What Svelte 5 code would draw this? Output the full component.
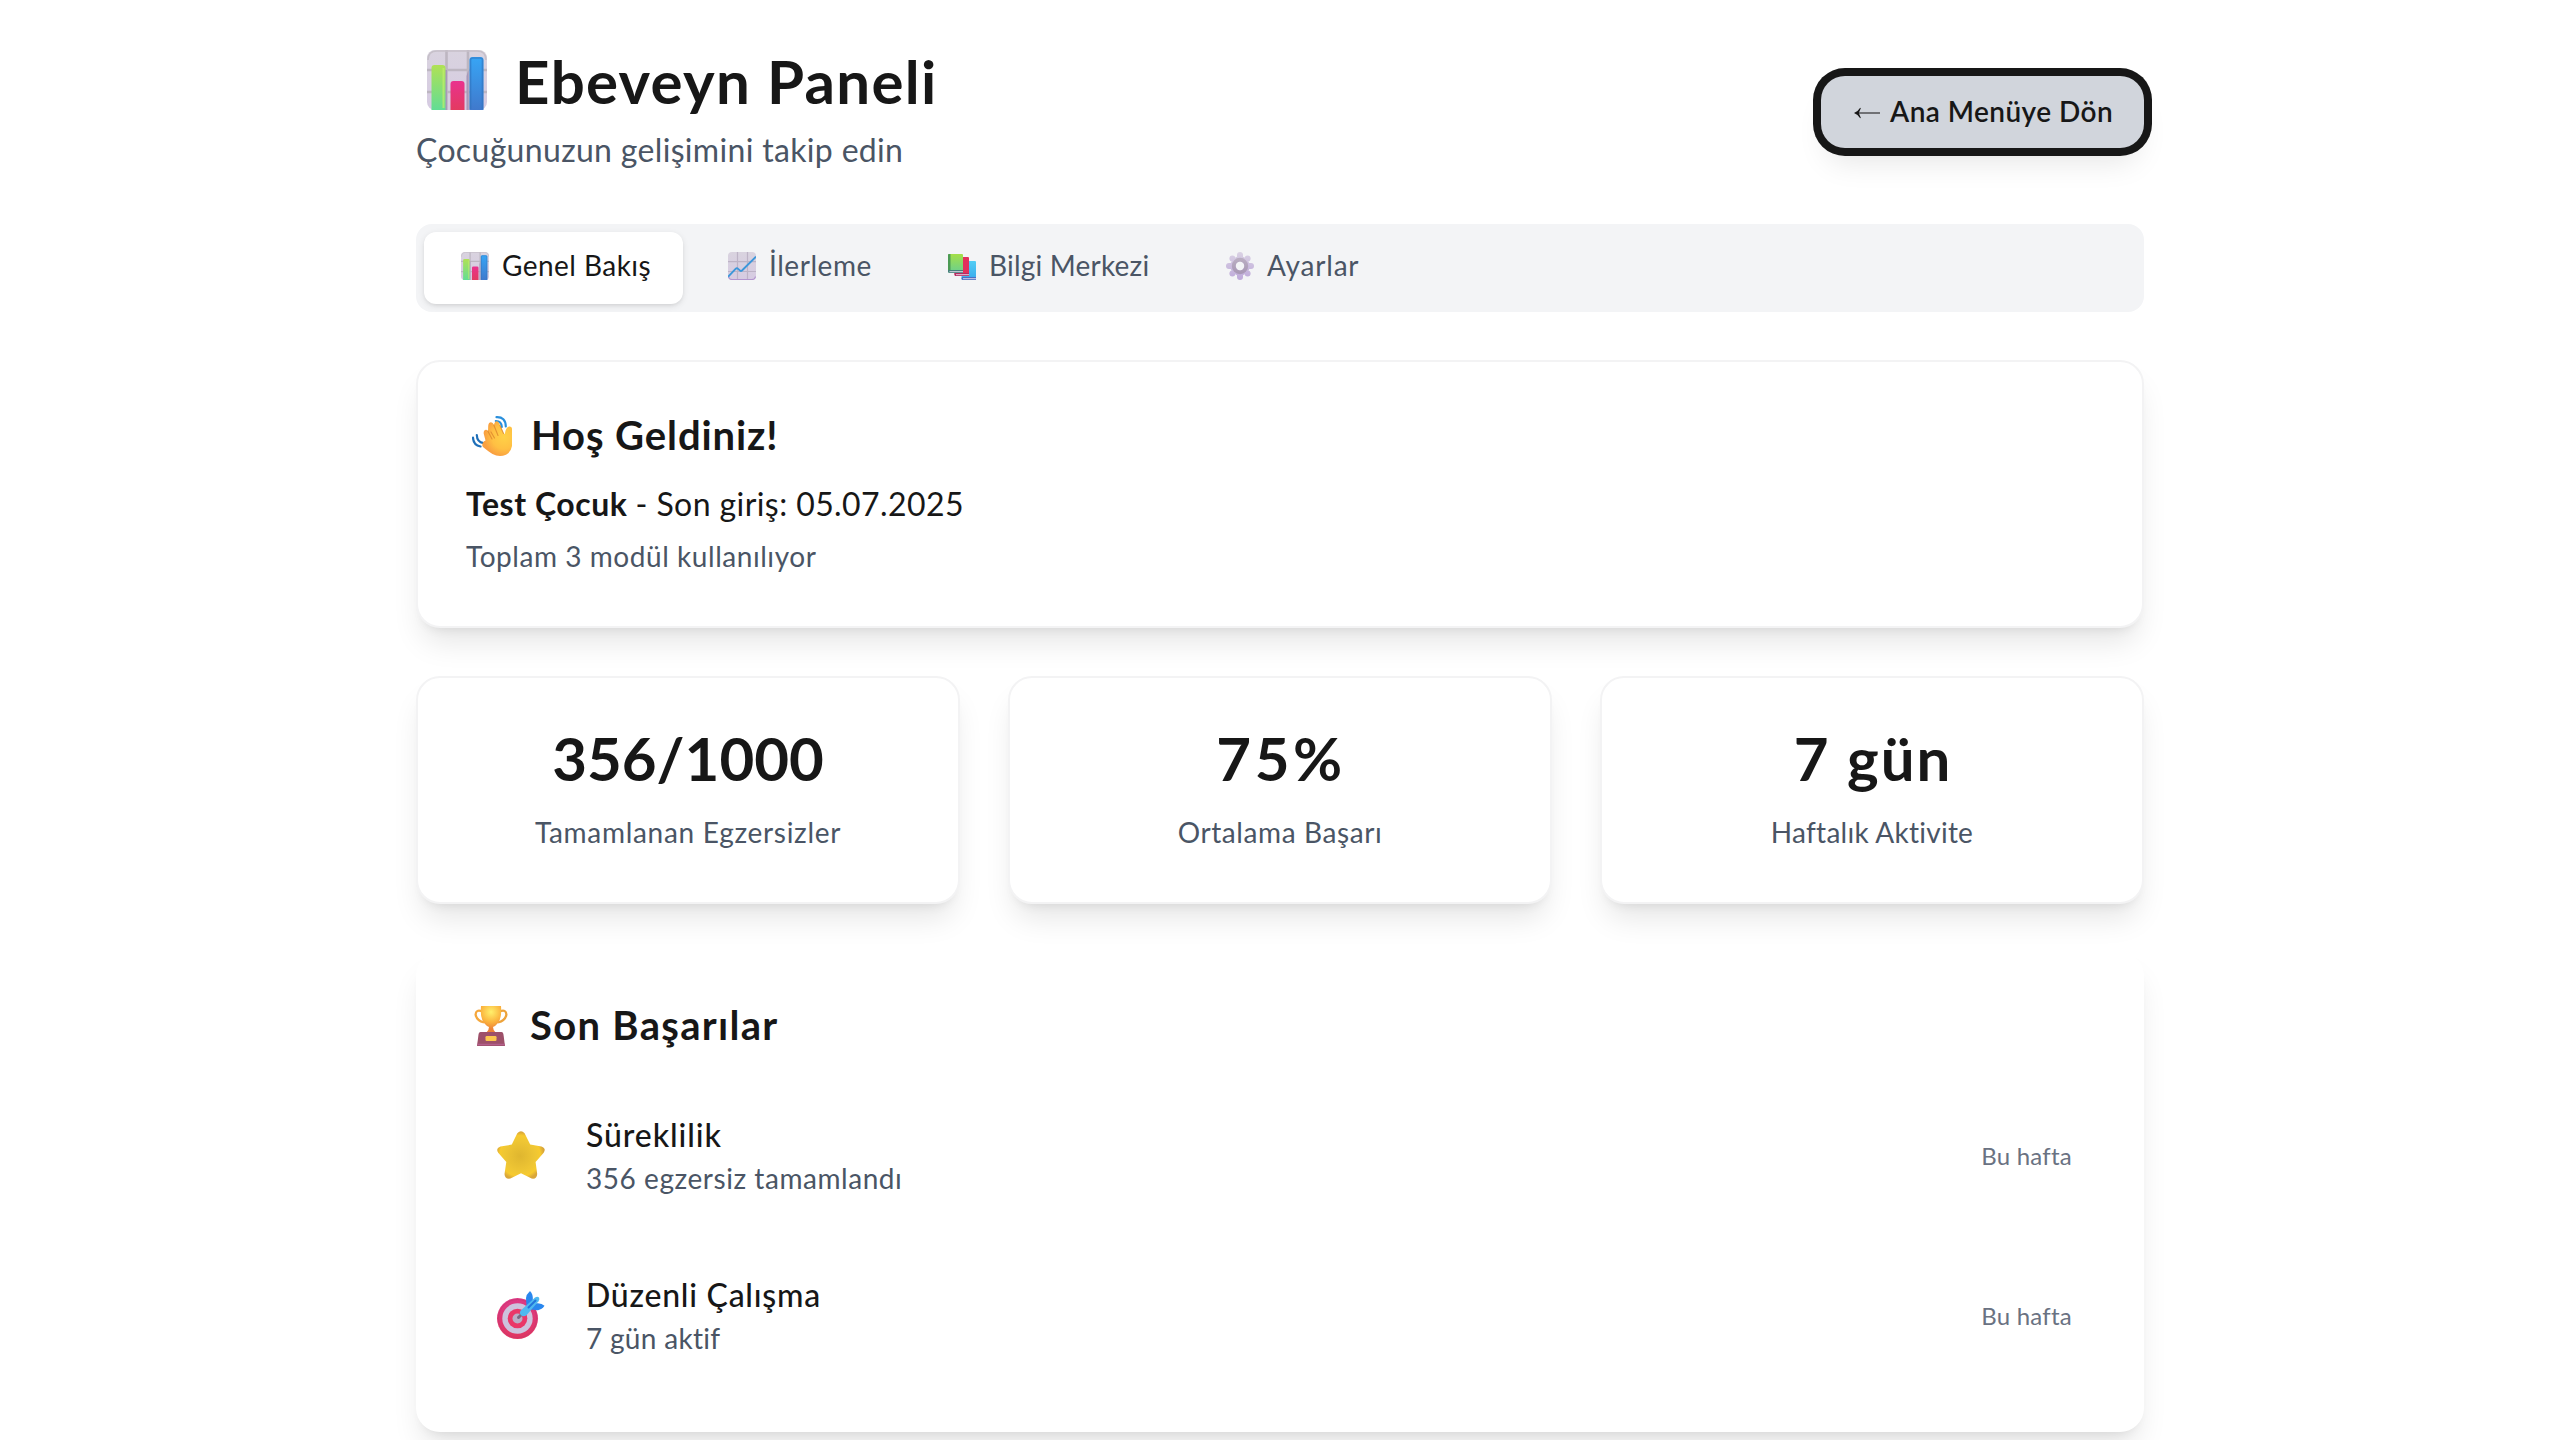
<script>
  let active = $state('overview');

  const tabs = [
    { id: 'overview', label: 'Genel Bakış', icon: 'bars' },
    { id: 'progress', label: 'İlerleme', icon: 'trend' },
    { id: 'info', label: 'Bilgi Merkezi', icon: 'books' },
    { id: 'settings', label: 'Ayarlar', icon: 'gear' }
  ];

  const stats = [
    { id: 'done', value: '356/1000', label: 'Tamamlanan Egzersizler' },
    { id: 'average', value: '75%', label: 'Ortalama Başarı' },
    { id: 'weekly', value: '7 gün', label: 'Haftalık Aktivite' }
  ];

  const achievements = [
    { id: 'streak', icon: 'star', title: 'Süreklilik', detail: '356 egzersiz tamamlandı', when: 'Bu hafta' },
    { id: 'regular', icon: 'target', title: 'Düzenli Çalışma', detail: '7 gün aktif', when: 'Bu hafta' }
  ];
</script>

<!-- Shared gradients for the icon set -->
<svg class="defs" width="0" height="0" aria-hidden="true">
  <defs>
    <linearGradient id="paper" x1="0" y1="0" x2="0" y2="1"><stop offset="0" stop-color="#d9d3df" /><stop offset="1" stop-color="#d6cbe2" /></linearGradient>
    <linearGradient id="green" x1="0" y1="0" x2="0" y2="1"><stop offset="0" stop-color="#b0e155" /><stop offset="1" stop-color="#62dd95" /></linearGradient>
    <linearGradient id="pink" x1="0" y1="0" x2="0" y2="1"><stop offset="0" stop-color="#e9328e" /><stop offset="1" stop-color="#e33a60" /></linearGradient>
    <linearGradient id="blue" x1="0" y1="0" x2="0" y2="1"><stop offset="0" stop-color="#37a5f5" /><stop offset="1" stop-color="#4079cc" /></linearGradient>
    <linearGradient id="sky" x1="0" y1="0" x2="0" y2="1"><stop offset="0" stop-color="#52cdf4" /><stop offset="1" stop-color="#38a9ec" /></linearGradient>
    <linearGradient id="leaf" x1="0" y1="0" x2="0" y2="1"><stop offset="0" stop-color="#a4df48" /><stop offset="1" stop-color="#68cf91" /></linearGradient>
    <linearGradient id="lilac" gradientUnits="userSpaceOnUse" x1="14" y1="0" x2="14" y2="28"><stop offset="0" stop-color="#dad2e4" /><stop offset="1" stop-color="#bda8d9" /></linearGradient>
    <linearGradient id="ring" x1="0" y1="0" x2="0" y2="1"><stop offset="0" stop-color="#b9adc1" /><stop offset="1" stop-color="#a999b6" /></linearGradient>
    <radialGradient id="skin" gradientUnits="userSpaceOnUse" cx="32" cy="21" r="20"><stop offset="0" stop-color="#ffd147" /><stop offset="0.6" stop-color="#ffc043" /><stop offset="1" stop-color="#f99f40" /></radialGradient>
    <radialGradient id="gold" gradientUnits="userSpaceOnUse" cx="20" cy="6" r="17"><stop offset="0" stop-color="#fff06c" /><stop offset="0.6" stop-color="#fbb43e" /><stop offset="1" stop-color="#ec8238" /></radialGradient>
    <radialGradient id="starfill" gradientUnits="userSpaceOnUse" cx="23" cy="25" r="24"><stop offset="0" stop-color="#dfb62f" /><stop offset="0.65" stop-color="#efc634" /><stop offset="0.85" stop-color="#f7ca2e" /><stop offset="1" stop-color="#d9a63a" /></radialGradient>
    <linearGradient id="board" x1="0" y1="0" x2="0" y2="1"><stop offset="0" stop-color="#dd3a86" /><stop offset="1" stop-color="#e03660" /></linearGradient>
  </defs>
</svg>

{#snippet icon(name)}
  {#if name === 'bars'}
    <svg class="icon" viewBox="0 0 60 60" aria-hidden="true">
      <rect width="60" height="60" rx="8" fill="url(#paper)" />
      <path d="M19.500 0V60M41 0V60M0 20H60M0 42H60" stroke="#bdb6c1" stroke-width="2.600" />
      <path d="M1 10Q1 1 10 1H50Q59 1 59 10" fill="none" stroke="#c6c0c9" stroke-width="1.600" />
      <path d="M18 20H20V60H18ZM39.500 26V60H41.500V20Z" fill="#9a83b5" opacity=".6" />
      <path d="M4.500 60V18Q4.500 15 7.500 15H15.500Q18.500 15 18.500 18V60Z" fill="url(#green)" />
      <path d="M16.500 18V58" stroke="#c2ef6a" stroke-width="2" opacity=".7" />
      <path d="M23.500 60V34Q23.500 31 26.500 31H34.500Q37.500 31 37.500 34V60Z" fill="url(#pink)" />
      <path d="M42.500 60V10Q42.500 7 45.500 7H53.500Q56.500 7 56.500 10V60Z" fill="url(#blue)" />
      <path d="M43.500 59V10Q43.500 8 46 8H53Q55.500 8 55.500 10V59" fill="none" stroke="#2e72bd" stroke-width="1.600" opacity=".6" />
    </svg>
  {:else if name === 'trend'}
    <svg class="icon" viewBox="0 0 28 28" aria-hidden="true">
      <rect width="28" height="28" rx="4" fill="url(#paper)" />
      <path d="M9.500 0V28M19.500 0V28M0 9.700H28M0 19.500H28" stroke="#bdb3c6" stroke-width="1.200" />
      <path d="M.5 24.500Q1 27.500 4 27.500H24Q27 27.500 27.500 24.500" fill="none" stroke="#b395cf" stroke-width="1.200" />
      <path d="M0 24.800L7.600 16.900Q8.900 15.600 10.200 16.900L12 18.600Q13 19.400 14 18.500L28 4.600" fill="none" stroke="#3c97da" stroke-width="1.900" />
    </svg>
  {:else if name === 'books'}
    <svg class="icon" viewBox="0 0 28 28" aria-hidden="true">
      <path d="M14 10Q14 9 15 9H27Q28 9 28 10V28H15Q13.500 28 13.500 26Z" fill="url(#sky)" />
      <path d="M14 25H28V28H15Q13.500 28 13.500 26.500Z" fill="#4a6fc4" />
      <path d="M15 26.200H28V27.200H15Z" fill="#d6d3ea" />
      <path d="M7 5H20Q21 5 21 6V24H8Q6.500 24 6.500 22Z" fill="#e2305c" />
      <path d="M6.500 21H21V24H8Q6.500 24 6.500 22.500Z" fill="#b52a62" />
      <path d="M8 22.200H21V23.200H8Z" fill="#e6cde0" />
      <path d="M0 3Q0 2 1 2H14Q15 2 15 3V21H2Q0 21 0 19Z" fill="url(#leaf)" />
      <path d="M0 3Q0 2 1 2H2.500V19H0Z" fill="#4b9a54" />
      <path d="M0 18H15V21H2Q0 21 0 19.500Z" fill="#45807a" />
      <path d="M1.500 19.200H15V20.200H1.500Z" fill="#dcd8ea" />
    </svg>
  {:else if name === 'gear'}
    <svg class="icon" viewBox="0 0 28 28" aria-hidden="true">
      <g fill="url(#lilac)">
        <circle cx="14" cy="14" r="9.700" />
        <rect x="11" y="0" width="6" height="28" rx="3" />
        <rect x="0" y="11" width="28" height="6" rx="3" />
        <circle cx="6.400" cy="6.400" r="3" /><circle cx="21.600" cy="6.400" r="3" />
        <circle cx="6.400" cy="21.600" r="3" /><circle cx="21.600" cy="21.600" r="3" />
      </g>
      <circle cx="14" cy="14" r="6.200" fill="none" stroke="url(#ring)" stroke-width="4" />
      <circle cx="14" cy="14" r="4.200" fill="#f3f4f6" />
    </svg>
  {:else if name === 'wave'}
    <svg class="icon" viewBox="0 0 40 40" aria-hidden="true">
      <g fill="none" stroke="#2a8fdc" stroke-width="2.200" stroke-linecap="round">
        <path d="M24.500 1.200Q33.500 .8 33.800 10.500M23.800 5Q29.500 5 29.800 11" />
        <path d="M1 21.500Q1.200 29 8.500 30.500M4.800 19Q5 26 11.500 27.200" stroke="#1f6fb8" />
      </g>
      <path d="M11 31Q9.500 29 11 26.500Q12 25 13.500 24.500L11.800 18Q11.200 15 13 14Q14.800 13.200 16 15.200L16.200 10Q16.400 6.500 19 6.300Q21 6.300 22 9L22.300 7.500Q23.300 4.800 25.700 5.500Q27 6 28 9L31.500 17Q32.500 19 33 17Q33.800 11.500 37 10.500Q40 10.200 40 13V30Q39 36 34 38.800Q27 41.500 20.500 38Q17 36 11 31Z" fill="url(#skin)" />
      <path d="M15.800 15L20 23M21.800 9L26 19.500M19 16L22.500 22M28 9.500L31.500 17.500" fill="none" stroke="#d9822b" stroke-width="1.100" stroke-linecap="round" opacity=".75" />
    </svg>
  {:else if name === 'trophy'}
    <svg class="icon" viewBox="0 0 40 40" aria-hidden="true">
      <g fill="none" stroke-width="2.300">
        <path d="M11.500 5.500Q4.800 3 4.600 8.500Q5.500 14.500 13 16.500" stroke="#f5a73c" />
        <path d="M28.500 5.500Q35.200 3 35.400 8.500Q34.500 14.500 27 16.500" stroke="#eda33b" />
      </g>
      <path d="M10 0H30Q31 12 27 17Q24.500 20 22 21Q22 24.500 25 27H15Q18 24.500 18 21Q15.500 20 13 17Q9 12 10 0Z" fill="url(#gold)" />
      <path d="M9.500 26H30.500Q32 26 32.400 28L34 40H6L7.600 28Q8 26 9.500 26Z" fill="#9d5069" />
      <path d="M6.300 38.500H33.700" stroke="#b35f8c" stroke-width="1.500" />
      <rect x="14.500" y="30" width="11" height="5" rx="1.200" fill="#fcc64e" />
    </svg>
  {:else if name === 'star'}
    <svg class="icon" viewBox="0 0 48 48" aria-hidden="true">
      <path d="M20.300 2.300Q24 -2 27.600 2.300L33.200 13.600L44.500 15.400Q49.600 17.300 46.700 21.700L38.600 31L40.200 43Q39.800 48.600 34.600 47.600L24 42.200L13.400 47.600Q7.800 48.600 7.500 43L9.300 31L1.200 21.700Q-1.600 17.300 3.500 15.400L14.800 13.600Z" fill="url(#starfill)" />
    </svg>
  {:else if name === 'target'}
    <svg class="icon" viewBox="0 0 48 48" aria-hidden="true">
      <circle cx="20.500" cy="27.500" r="20.500" fill="url(#board)" />
      <circle cx="20.500" cy="27.500" r="19" fill="none" stroke="#c7366f" stroke-width="1" opacity=".6" />
      <circle cx="20.500" cy="27.500" r="15.200" fill="#cdc3dd" />
      <circle cx="20.500" cy="27.500" r="9.800" fill="#ea3768" />
      <circle cx="20.500" cy="27.500" r="5" fill="#baadc6" />
      <path d="M21.500 26.500L26 22" stroke="#786a83" stroke-width="3" stroke-linecap="round" />
      <path d="M29.500 15.500L29 7Q29.200 3.500 33 0Q36.200 3.200 35.800 8.500L34 13Z" fill="#2a87ee" />
      <path d="M33.500 18.500L41 19.200Q45 18.500 47.500 14.800Q44.500 11.800 39.500 12.300L35.500 14Z" fill="#2a87ee" />
      <path d="M23.800 19.500L38 6.500Q40.500 4.800 42 6.500Q43 8 41.500 10.200L29.500 24.300Q26.500 26.200 24 24.300Q21.800 21.800 23.800 19.500Z" fill="#4fb9ef" />
      <path d="M31.500 16.500L38.500 9.500" stroke="#2375dc" stroke-width="2" stroke-linecap="round" />
    </svg>
  {/if}
{/snippet}

<main class="page">
  <header class="header">
    <div class="heading">
      <h1><span class="title-icon">{@render icon('bars')}</span><span class="title">Ebeveyn Paneli</span></h1>
      <p>Çocuğunuzun gelişimini takip edin</p>
    </div>
    <button class="back" type="button">
      <svg class="arrow" viewBox="0 0 26 12" aria-hidden="true">
        <path d="M2 6H26" stroke="#171717" stroke-width="1.300" opacity=".8" />
        <path d="M0 6Q4 4.500 6.200 .8L6.800 1.200Q5.600 4 4.800 6Q5.600 8 6.800 10.800L6.200 11.200Q4 7.500 0 6Z" fill="#171717" />
      </svg>
      <span>Ana Menüye Dön</span>
    </button>
  </header>

  <nav class="tabs">
    {#each tabs as tab (tab.id)}
      <button type="button" class="tab {tab.id}" class:active={active === tab.id} onclick={() => (active = tab.id)}>
        {@render icon(tab.icon)}
        <span>{tab.label}</span>
      </button>
    {/each}
  </nav>

  <section class="card welcome">
    <h2>{@render icon('wave')}<span>Hoş Geldiniz!</span></h2>
    <p class="child"><strong>Test Çocuk</strong><span>- Son giriş: 05.07.2025</span></p>
    <p class="modules">Toplam 3 modül kullanılıyor</p>
  </section>

  <section class="stats">
    {#each stats as stat (stat.id)}
      <div class="card stat {stat.id}">
        <div class="value">{stat.value}</div>
        <div class="label">{stat.label}</div>
      </div>
    {/each}
  </section>

  <section class="achievements">
    <h2>{@render icon('trophy')}<span>Son Başarılar</span></h2>
    <ul>
      {#each achievements as item (item.id)}
        <li class={item.id}>
          {@render icon(item.icon)}
          <div class="text">
            <div class="name">{item.title}</div>
            <div class="detail">{item.detail}</div>
          </div>
          <time>{item.when}</time>
        </li>
      {/each}
    </ul>
  </section>
</main>

<style>
  :global(body) {
    background: #fff;
    overflow: hidden;
  }
  .defs {
    position: absolute;
  }
  .page {
    box-sizing: border-box;
    width: 1728px;
    height: 1440px;
    margin: 0 auto;
    padding-top: 50px;
    font-family: Lato, 'Open Sans', sans-serif;
    color: #171717;
  }
  h1, h2, p, ul {
    margin: 0;
    padding: 0;
  }
  button {
    border: 0;
    font: inherit;
    color: inherit;
    white-space: nowrap;
  }
  .icon {
    display: block;
    flex: none;
  }

  .header {
    display: flex;
    justify-content: space-between;
    align-items: center;
    height: 124px;
    margin-bottom: 50px;
  }
  h1 {
    display: flex;
    gap: 28px;
    height: 60px;
    padding-left: 11px;
    font-size: 60px;
    line-height: 60px;
    font-weight: 700;
    letter-spacing: 1.3px;
  }
  .title {
    padding-top: 1px;
  }
  .title-icon .icon {
    width: 60px;
    height: 60px;
  }
  .heading p {
    margin-top: 16px;
    font-size: 32px;
    line-height: 48px;
    letter-spacing: 0.33px;
    color: #4a5565;
  }
  .back {
    display: flex;
    align-items: center;
    gap: 10px;
    box-sizing: border-box;
    width: 323px;
    height: 72px;
    padding: 0 0 3px 33px;
    border-radius: 24px;
    background: #d1d5dc;
    box-shadow:
      0 0 0 8px #171717,
      0 20px 30px -6px rgba(0, 0, 0, 0.1),
      0 8px 12px -8px rgba(0, 0, 0, 0.1);
    font-size: 28px;
    font-weight: 600;
    letter-spacing: 0.45px;
  }
  .arrow {
    width: 26px;
    height: 12px;
    margin-top: 4px;
  }

  .tabs {
    display: flex;
    gap: 8px;
    box-sizing: border-box;
    height: 88px;
    padding: 8px;
    margin-bottom: 48px;
    border-radius: 16px;
    background: #f3f4f6;
  }
  .tab {
    display: flex;
    align-items: center;
    gap: 13px;
    padding: 0 0 4px 37px;
    border-radius: 12px;
    background: none;
    font-size: 28px;
    color: #4a5565;
  }
  .tab span {
    padding-bottom: 2px;
  }
  .tab .icon {
    width: 28px;
    height: 28px;
  }
  .tab.active {
    background: #fff;
    color: #171717;
    box-shadow: 0 2px 6px rgba(0, 0, 0, 0.1), 0 2px 4px -2px rgba(0, 0, 0, 0.1);
  }
  .overview { width: 259px; letter-spacing: 0.45px; }
  .progress { width: 212px; letter-spacing: 0.55px; }
  .info { width: 270px; letter-spacing: 0.2px; }
  .settings { width: 201px; letter-spacing: 0.8px; }

  .card {
    box-sizing: border-box;
    border: 2px solid #f3f3f4;
    border-radius: 24px;
    background: #fff;
    box-shadow:
      0 20px 30px -6px rgba(0, 0, 0, 0.1),
      0 8px 12px -8px rgba(0, 0, 0, 0.1);
  }
  h2 {
    display: flex;
    align-items: center;
    height: 48px;
    font-size: 40px;
    line-height: 48px;
    font-weight: 700;
  }
  h2 .icon {
    width: 40px;
    height: 40px;
    margin-top: 4px;
  }
  h2 span {
    padding-top: 2px;
  }
  .welcome {
    height: 268px;
    padding: 48px;
    margin-bottom: 48px;
  }
  .welcome h2 {
    gap: 19px;
    padding-left: 6px;
    letter-spacing: 0.9px;
  }
  .child {
    display: flex;
    gap: 8px;
    margin-top: 22px;
    font-size: 32px;
    line-height: 48px;
    letter-spacing: 0.42px;
  }
  .child strong {
    font-weight: 700;
    letter-spacing: 0.55px;
  }
  .modules {
    margin-top: 8px;
    font-size: 28px;
    line-height: 40px;
    letter-spacing: 0.55px;
    color: #4a5565;
  }

  .stats {
    display: grid;
    grid-template-columns: repeat(3, 1fr);
    gap: 48px;
    margin-bottom: 48px;
  }
  .stat {
    height: 228px;
    padding-top: 50px;
    text-align: center;
  }
  .value {
    font-size: 60px;
    line-height: 60px;
    font-weight: 700;
  }
  .done .value { letter-spacing: 0; }
  .average .value { letter-spacing: 3.5px; text-indent: 2px; }
  .weekly .value { letter-spacing: 2px; text-indent: 2px; }
  .label {
    margin-top: 24px;
    font-size: 28px;
    line-height: 40px;
    color: #4a5565;
  }
  .done .label { letter-spacing: 0.7px; }
  .average .label { letter-spacing: 0.6px; }
  .weekly .label { letter-spacing: 0.25px; }

  .achievements {
    box-sizing: border-box;
    height: 480px;
    padding: 48px;
    border-radius: 24px;
    background: #fff;
    box-shadow:
      0 20px 30px -6px rgba(0, 0, 0, 0.1),
      0 8px 12px -8px rgba(0, 0, 0, 0.1);
  }
  .achievements h2 {
    gap: 19px;
    padding-left: 7px;
    letter-spacing: 1.3px;
  }
  ul {
    display: flex;
    flex-direction: column;
    gap: 24px;
    margin-top: 39px;
    list-style: none;
  }
  li {
    display: flex;
    align-items: center;
    gap: 41px;
    height: 136px;
    padding: 0 24px 0 33px;
  }
  li .icon {
    width: 48px;
    height: 48px;
  }
  .text {
    flex: 1;
    padding-bottom: 1px;
  }
  .name {
    font-size: 32px;
    line-height: 46px;
    font-weight: 500;
  }
  .detail {
    font-size: 28px;
    line-height: 40px;
    color: #4a5565;
  }
  .streak .name { letter-spacing: 0.9px; }
  .streak .detail { letter-spacing: 0.55px; }
  .regular .name { letter-spacing: 0.75px; }
  .regular .detail { letter-spacing: 0.3px; }
  time {
    font-size: 24px;
    letter-spacing: 0.25px;
    color: #6a7282;
  }
</style>
